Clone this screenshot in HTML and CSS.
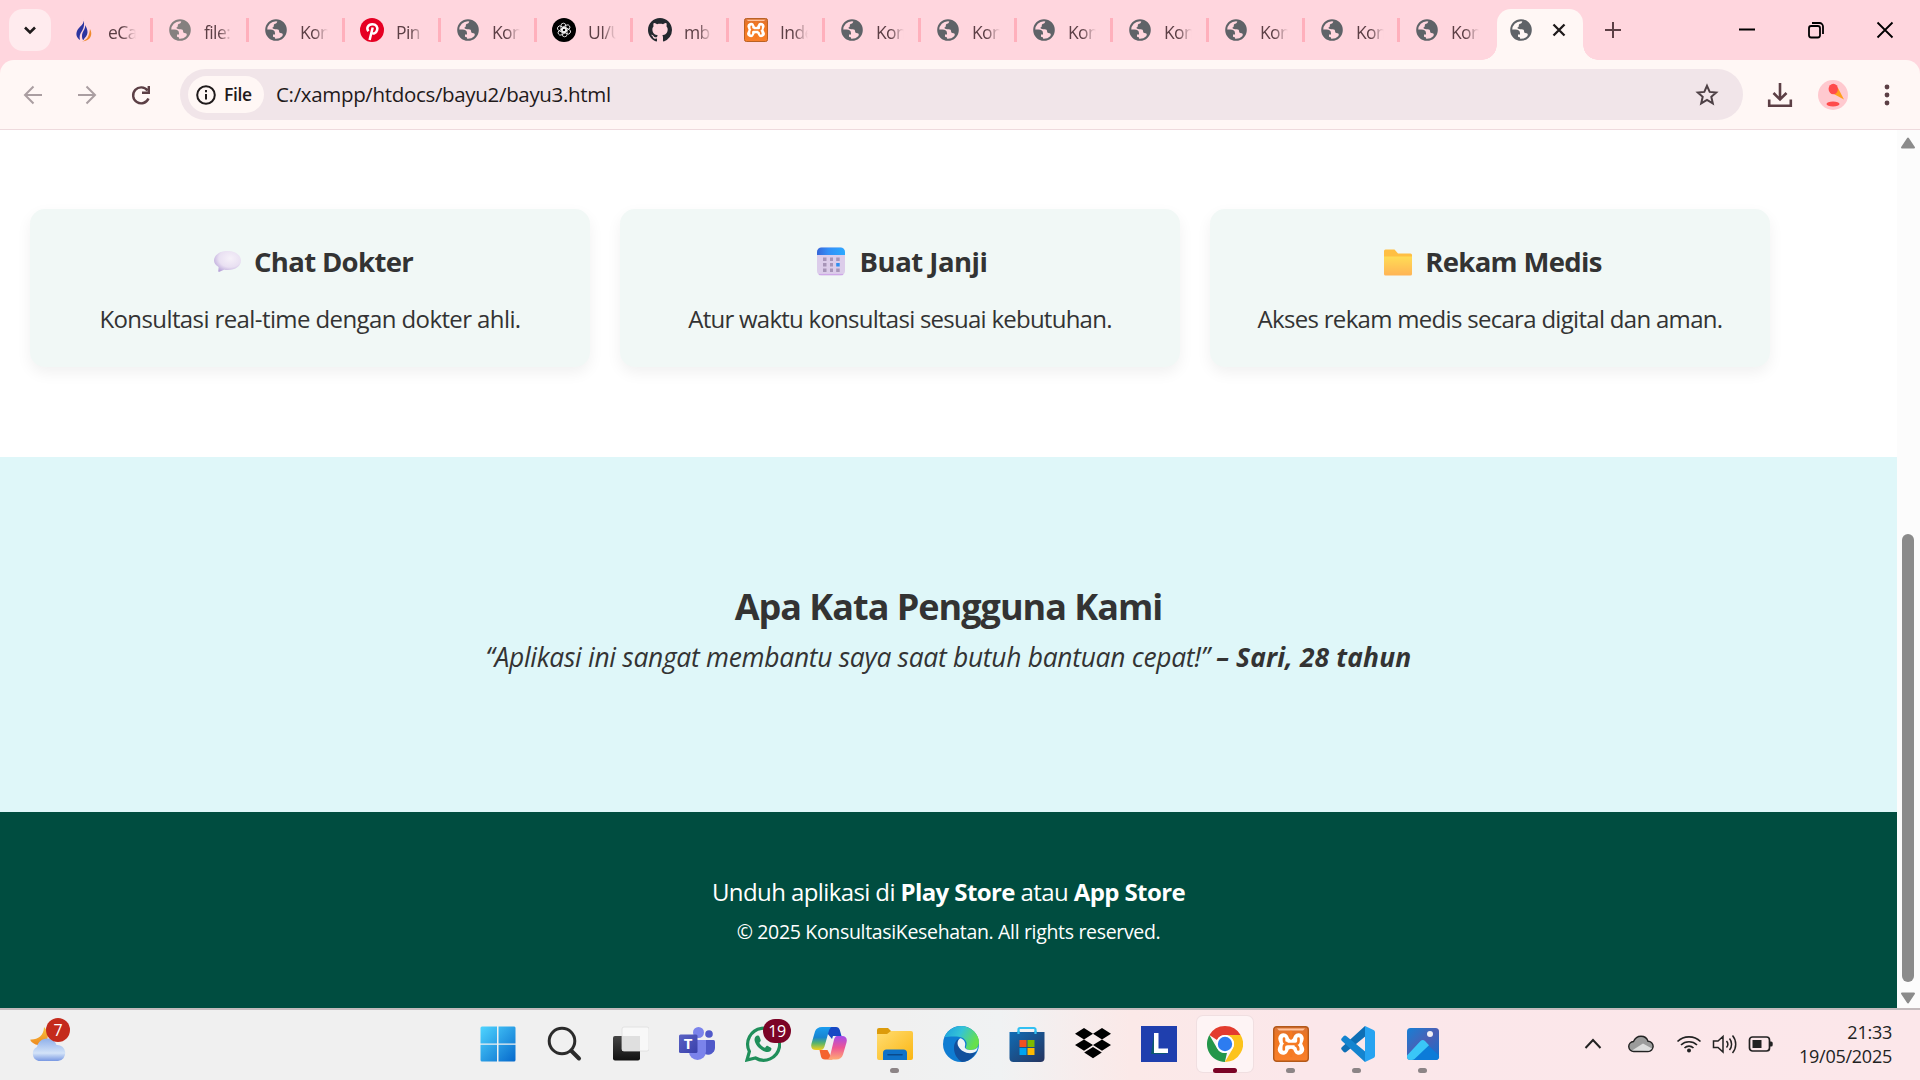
FILE: index.html
```html
<!DOCTYPE html>
<html lang="id">
<head>
<meta charset="utf-8">
<title>Konsultasi Kesehatan</title>
<link rel="stylesheet" href="styles.css">
</head>
<body>
<svg class="defs" width="0" height="0" aria-hidden="true">
  <defs>
    <linearGradient id="gWin" x1="0" y1="0" x2="1" y2="1"><stop offset="0" stop-color="#4fd5ff"/><stop offset="1" stop-color="#0669cc"/></linearGradient>
    <linearGradient id="gDark" x1="0" y1="0" x2="0" y2="1"><stop offset="0" stop-color="#454545"/><stop offset="1" stop-color="#111"/></linearGradient>
    <linearGradient id="gCloud" x1="0" y1="0" x2="0" y2="1"><stop offset="0" stop-color="#8fb0ea"/><stop offset=".65" stop-color="#d3e3f8"/><stop offset="1" stop-color="#7898e2"/></linearGradient>
    <linearGradient id="gFolder" x1="0" y1="0" x2="1" y2="1"><stop offset="0" stop-color="#ffdd72"/><stop offset="1" stop-color="#fbb613"/></linearGradient>
    <linearGradient id="gFolderE" x1="0" y1="0" x2="0" y2="1"><stop offset="0" stop-color="#ffdc55"/><stop offset="1" stop-color="#ffb455"/></linearGradient>
    <linearGradient id="gCal" x1="0" y1="0" x2="1" y2="0"><stop offset="0" stop-color="#3566d8"/><stop offset=".4" stop-color="#338ef7"/><stop offset="1" stop-color="#2caaff"/></linearGradient>
    <radialGradient id="gChat" cx=".6" cy=".35" r=".7"><stop offset="0" stop-color="#f6f1f9"/><stop offset=".6" stop-color="#e9e0f2"/><stop offset="1" stop-color="#b9a5d9"/></radialGradient>
    <linearGradient id="gCopA" x1="0" y1="0" x2="0" y2="1"><stop offset="0" stop-color="#1b9df0"/><stop offset=".45" stop-color="#1784d0"/><stop offset=".7" stop-color="#57b36c"/><stop offset="1" stop-color="#f4d01c"/></linearGradient>
    <linearGradient id="gCopB" x1="0" y1="0" x2="0" y2="1"><stop offset="0" stop-color="#a54bea"/><stop offset=".5" stop-color="#ee5694"/><stop offset="1" stop-color="#ffab75"/></linearGradient>
    <linearGradient id="gEdge" x1="0" y1="0" x2="1" y2=".4"><stop offset="0" stop-color="#1b9de0"/><stop offset=".5" stop-color="#34c3d6"/><stop offset="1" stop-color="#66e04c"/></linearGradient>
    <linearGradient id="gStore" x1="0" y1="0" x2="1" y2="1"><stop offset="0" stop-color="#0f6cb5"/><stop offset="1" stop-color="#26345f"/></linearGradient>
    <linearGradient id="gXampp" x1="0" y1="0" x2="0" y2="1"><stop offset="0" stop-color="#d9743a"/><stop offset=".3" stop-color="#f0741d"/><stop offset="1" stop-color="#f9802b"/></linearGradient>
    <linearGradient id="gPhoto" x1="0" y1="0" x2="1" y2="1"><stop offset="0" stop-color="#1580d6"/><stop offset=".5" stop-color="#4c5fb4"/><stop offset="1" stop-color="#0f6fd0"/></linearGradient>
    <linearGradient id="gTeams" x1="0" y1="0" x2="1" y2="1"><stop offset="0" stop-color="#5a62c3"/><stop offset="1" stop-color="#3940ab"/></linearGradient>
    <linearGradient id="gMoon" x1="0" y1="0" x2="0" y2="1"><stop offset="0" stop-color="#f7c440"/><stop offset="1" stop-color="#ee8a1d"/></linearGradient>
  </defs>
  <symbol id="globe" viewBox="0 0 24 24">
    <circle cx="12" cy="12" r="9.800" fill="none" stroke="currentColor" stroke-width="2"/>
    <path fill="currentColor" d="M13.500 2.200c-.2 2.300-1 3.200-2.400 3.600-1 .3-1.300.9-1.300 1.900 0 1.100-.6 1.600-1.500 1.900.3 1.300 1.200 1.700 3 1.700h1.500c1.600 0 2.300.9 2.300 2.200 0 1.200.9 1.700 2.200 1.700 1.100 0 1.500.700 1.500 1.700v2.200A10 10 0 0 0 13.500 2.200zM2.200 11.500h4.200c3 0 4.600 1.200 4.600 3.700v1.200h-2v1.700c0 .8.400 1.200 1.200 1.200h.8v2.500A10 10 0 0 1 2.200 11.500z"/>
  </symbol>
  <symbol id="xampp" viewBox="0 0 36 36">
    <rect x=".7" y=".7" width="34.600" height="34.600" rx="3" fill="url(#gXampp)" stroke="#b3591a" stroke-width="1.400"/>
    <path d="M4 2.500h28l-2 2H6z" fill="#ffc39b"/>
    <path d="M10.500 12.500 12.500 18l-2.500 5.500M25.500 12.500 23.500 18l2.500 5.500M13 18h10" fill="none" stroke="#fff" stroke-width="10.500" stroke-linecap="round" stroke-linejoin="round"/>
    <path d="M18 6v6.500M18 24v6" fill="none" stroke="#f57a22" stroke-width="2.500" stroke-linecap="round"/>
    <path d="M11 12.500v2c0 1.500 1 2.500 2.500 2.500M25.500 12.500v2.500c0 2-1.200 3-3 3h-8c-2.500 0-3.700 1.200-3.700 3v2.500M22.800 19.500c1.700.5 2.500 1.500 2.500 4" fill="none" stroke="#f57a22" stroke-width="2.600" stroke-linecap="round"/>
  </symbol>
</svg>

<header class="browser">
  <div class="tabstrip">
    <button class="tab-search"><svg width="16" height="16" viewBox="0 0 16 16"><path d="M3 5.500l5 5 5-5" fill="none" stroke="#1f1a1b" stroke-width="2.600"/></svg></button>
    <div class="tabs">
      <div class="tab"><svg viewBox="0 0 24 24"><path d="M11 0c3 6-4 8-6 13-1.500 4 0 7 3 9-1-4 0-6 2-9s3-8 1-13z" fill="#2c35a0"/><path d="M13 7c1 4-3 6-3 11 0 2 .5 4 1.500 4 1.500-3 4-4 4-8 0-2-1-5-2.500-7z" fill="#2c35a0"/><path d="M18 11c3 5 1 12-8 12.500 6-2 7-6 8-12.500z" fill="#ef8a2c"/></svg><span>eCa</span></div>
      <div class="tab dim"><svg><use href="#globe"/></svg><span>file:</span></div>
      <div class="tab"><svg><use href="#globe"/></svg><span>Kon</span></div>
      <div class="tab"><svg viewBox="0 0 24 24"><circle cx="12" cy="12" r="12" fill="#e60023"/><path d="M8.400 13.200C6 10.200 8 6.200 12.300 6.200c3.800 0 5.700 2.800 4.800 6-.9 3.300-4.300 4.400-5.800 2.200M12.700 9.500 9.600 22" fill="none" stroke="#fff" stroke-width="2.500"/></svg><span>Pin</span></div>
      <div class="tab"><svg><use href="#globe"/></svg><span>Kon</span></div>
      <div class="tab"><svg viewBox="0 0 24 24"><circle cx="12" cy="12" r="12" fill="#000"/><g fill="none" stroke="#fff" stroke-width=".8"><rect x="9" y="5.200" width="4.800" height="9" rx="2.400"/><rect x="9" y="5.200" width="4.800" height="9" rx="2.400" transform="rotate(60 12 12)"/><rect x="9" y="5.200" width="4.800" height="9" rx="2.400" transform="rotate(120 12 12)"/><rect x="9" y="5.200" width="4.800" height="9" rx="2.400" transform="rotate(180 12 12)"/><rect x="9" y="5.200" width="4.800" height="9" rx="2.400" transform="rotate(240 12 12)"/><rect x="9" y="5.200" width="4.800" height="9" rx="2.400" transform="rotate(300 12 12)"/></g></svg><span>UI/U</span></div>
      <div class="tab"><svg viewBox="0 0 16 16"><path fill="#24292f" d="M8 0C3.580 0 0 3.580 0 8c0 3.540 2.290 6.530 5.470 7.590.4.070.55-.17.55-.38 0-.19-.01-.82-.01-1.490-2.010.37-2.530-.49-2.690-.94-.09-.23-.48-.94-.82-1.130-.28-.15-.68-.52-.01-.53.63-.01 1.080.58 1.230.82.72 1.210 1.870.87 2.330.66.07-.52.28-.87.51-1.070-1.780-.2-3.640-.89-3.640-3.950 0-.87.31-1.590.82-2.150-.08-.2-.36-1.020.08-2.120 0 0 .67-.21 2.200.82.64-.18 1.320-.27 2-.27s1.360.09 2 .27c1.530-1.040 2.200-.82 2.200-.82.44 1.100.16 1.920.08 2.120.51.56.82 1.270.82 2.150 0 3.070-1.870 3.750-3.650 3.950.29.25.54.73.54 1.480 0 1.070-.01 1.930-.01 2.200 0 .21.15.46.55.38A8.010 8.010 0 0 0 16 8c0-4.420-3.580-8-8-8z"/></svg><span>mb</span></div>
      <div class="tab"><svg><use href="#xampp"/></svg><span>Inde</span></div>
      <div class="tab"><svg><use href="#globe"/></svg><span>Kon</span></div>
      <div class="tab"><svg><use href="#globe"/></svg><span>Kon</span></div>
      <div class="tab"><svg><use href="#globe"/></svg><span>Kon</span></div>
      <div class="tab"><svg><use href="#globe"/></svg><span>Kon</span></div>
      <div class="tab"><svg><use href="#globe"/></svg><span>Kon</span></div>
      <div class="tab short"><svg><use href="#globe"/></svg><span>Kon</span></div>
      <div class="tab last"><svg><use href="#globe"/></svg><span>Kon</span></div>
      <div class="tab-active">
        <svg class="ico" viewBox="0 0 24 24"><use href="#globe"/></svg>
        <svg width="14" height="14" viewBox="0 0 14 14"><path d="M1.500 1.500l11 11M12.500 1.500l-11 11" stroke="#1f1a1b" stroke-width="2.300"/></svg>
      </div>
      <svg class="plus" width="18" height="18" viewBox="0 0 18 18"><path d="M9 1v16M1 9h16" stroke="#5c3f45" stroke-width="2"/></svg>
    </div>
    <div class="window-buttons">
      <svg width="18" height="18" viewBox="0 0 18 18"><path d="M1 8.500h16" stroke="#000" stroke-width="2"/></svg>
      <svg width="18" height="18" viewBox="0 0 18 18"><g fill="none" stroke="#000" stroke-width="1.800"><rect x="2" y="5" width="11" height="11.500" rx="2.200"/><path d="M5 2h7.500a3.500 3.500 0 0 1 3.500 3.500V13"/></g></svg>
      <svg width="18" height="18" viewBox="0 0 18 18"><path d="M1.500 1.500l15 15M16.500 1.500l-15 15" stroke="#000" stroke-width="1.800"/></svg>
    </div>
  </div>
  <div class="toolbar">
    <div class="nav">
      <svg class="off" viewBox="0 0 24 24"><path d="M21 12H5M12.500 3.500 4 12l8.500 8.500" /></svg>
      <svg class="off" viewBox="0 0 24 24"><path d="M3 12h16M11.500 3.500 20 12l-8.500 8.500"/></svg>
      <svg viewBox="0 0 24 24"><path d="M19.500 15.500A8 8 0 1 1 18.500 7.500M19.800 3v6.800H13"/></svg>
    </div>
    <div class="omnibox">
      <div class="chip">
        <svg width="20" height="20" viewBox="0 0 20 20"><circle cx="10" cy="10" r="8.800" fill="none" stroke="#1f1a1b" stroke-width="2"/><path d="M10 9v5.500M10 5v2.200" stroke="#1f1a1b" stroke-width="2"/></svg>
        <span>File</span>
      </div>
      <span class="url">C:/xampp/htdocs/bayu2/bayu3.html</span>
      <svg class="star" width="24" height="24" viewBox="0 0 24 24"><path d="M12 2.800l2.700 6.100 6.500.6-4.900 4.300 1.500 6.600-5.800-3.500-5.800 3.500 1.500-6.600-4.900-4.300 6.500-.6z" fill="none" stroke="#4d4045" stroke-width="2"/></svg>
    </div>
    <div class="actions">
      <svg width="26" height="26" viewBox="0 0 26 26"><path d="M13 1v16M6.500 11l6.500 6.500 6.500-6.500M2.200 17.500v6.200h21.600v-6.200" fill="none" stroke="#5c3f45" stroke-width="2.600"/></svg>
      <svg width="30" height="30" viewBox="0 0 30 30"><circle cx="15" cy="15" r="15" fill="#ffc9cf"/><path d="M13 12.500 20 8l6 11.500z" fill="#ff9f1c"/><ellipse cx="15.300" cy="9" rx="4.700" ry="5.200" fill="#ff4b4b"/><ellipse cx="15" cy="24" rx="6.500" ry="2.400" fill="#ff4b4b"/></svg>
      <svg width="6" height="24" viewBox="0 0 6 24"><g fill="#5c3f45"><circle cx="3" cy="4" r="2.400"/><circle cx="3" cy="12" r="2.400"/><circle cx="3" cy="20" r="2.400"/></g></svg>
    </div>
  </div>
</header>

<div class="viewport">
  <main class="page">
    <section class="features">
      <article class="card">
        <h3><svg width="38" height="32" viewBox="0 0 38 32"><path d="M19.500 4C27 4 33 8 33 13.500S27.500 23 20 23c-1.800 0-3-.2-4-.3L11 25c-.6 0-1-.6-.6-2l.2-3C7.500 18 6 16 6 13.500 6 8 12 4 19.500 4z" transform="translate(1 1)" fill="url(#gChat)"/></svg><span class="t1">Chat Dokter</span></h3>
        <p class="p1">Konsultasi real-time dengan dokter ahli.</p>
      </article>
      <article class="card">
        <h3><svg width="38" height="32" viewBox="0 0 38 32"><rect x="4" y="1.500" width="28" height="28" rx="4.500" fill="#dccdea"/><path d="M4 9V6a4.500 4.500 0 0 1 4.500-4.500h19A4.500 4.500 0 0 1 32 6v3z" fill="url(#gCal)"/><path d="M6 28.500h24" stroke="#cfa8e8" stroke-width="1.200"/><path d="M10 11.500h3.500v3.500H10zm7 0h3v3.500h-3zm6.200 0h3.500v3.500h-3.500zM10 17h3.500v3.500H10zm7 0h3v3.500h-3zM10 22.500h3.500V26H10zm7 0h3V26h-3zm6.200 0h3.500V26h-3.500z" fill="#a795b8"/><path d="M23.200 17h3.500v3.500h-3.500z" fill="#2f8ff0"/></svg><span class="t2">Buat Janji</span></h3>
        <p class="p2">Atur waktu konsultasi sesuai kebutuhan.</p>
      </article>
      <article class="card">
        <h3><svg width="38" height="32" viewBox="0 0 38 32"><g transform="translate(1 0)"><path d="M5 5a1.500 1.500 0 0 1 1.500-1.500h9l3.500 4h12.500A1.500 1.500 0 0 1 33 9v5H5z" fill="#ffbf43"/><path d="M5 10.500h28V28a1.500 1.500 0 0 1-1.500 1.500h-25A1.500 1.500 0 0 1 5 28z" fill="url(#gFolderE)"/></g></svg><span class="t3">Rekam Medis</span></h3>
        <p class="p3">Akses rekam medis secara digital dan aman.</p>
      </article>
    </section>
    <section class="testimonial">
      <h2>Apa Kata Pengguna Kami</h2>
      <p><span>“Aplikasi ini sangat membantu saya saat butuh bantuan cepat!”</span> <strong>– Sari, 28 tahun</strong></p>
    </section>
    <footer class="site-footer">
      <p class="download">Unduh aplikasi di <strong>Play Store</strong> atau <strong>App Store</strong></p>
      <p class="copy">© 2025 KonsultasiKesehatan. All rights reserved.</p>
    </footer>
  </main>
  <div class="scrollbar">
    <svg width="16" height="12" viewBox="0 0 16 12"><path d="M8 1.500 14 10.500H2z" fill="#8b8b8b" stroke="#8b8b8b" stroke-width="2" stroke-linejoin="round"/></svg>
    <div class="track"><div class="thumb"></div></div>
    <svg width="16" height="12" viewBox="0 0 16 12"><path d="M8 10.500 14 1.500H2z" fill="#8b8b8b" stroke="#8b8b8b" stroke-width="2" stroke-linejoin="round"/></svg>
  </div>
</div>

<footer class="taskbar">
  <div class="weather">
    <svg width="38" height="38" viewBox="0 0 38 38"><path d="M15 2c3 3 5 8 3 13-2 4-9 7-14 3-2-1-3-3-2.500-3.500C8 15 15 11 15 2z" fill="url(#gMoon)"/><path d="M9.500 36a7.500 7.500 0 0 1-1.500-14c1-5 5-8.500 10-8.500 4.500 0 8 2.500 9.500 6.500A8 8 0 0 1 29 36z" fill="url(#gCloud)"/></svg>
    <span class="badge red">7</span>
  </div>
  <div class="apps">
    <div class="app start"><svg viewBox="0 0 36 36"><path d="M.5 2A1.500 1.500 0 0 1 2 .5h15v17H.5zM18.500.5h15A1.500 1.500 0 0 1 35.500 2v15.500h-17zM.5 18.800h16.500v16.700H2A1.500 1.500 0 0 1 .5 34zM18.500 18.800h17V34a1.500 1.500 0 0 1-1.500 1.500H18.500z" fill="url(#gWin)"/></svg></div>
    <div class="app"><svg viewBox="0 0 36 36"><circle cx="15" cy="15" r="12.800" fill="none" stroke="#2b2b2b" stroke-width="3"/><path d="M24.500 25 32 32.500" stroke="#2b2b2b" stroke-width="4" stroke-linecap="round"/></svg></div>
    <div class="app"><svg viewBox="0 0 36 36"><rect y="10" width="27" height="24.500" rx="2" fill="url(#gDark)"/><path d="M9 10h18v15H9z" fill="#b9b9b9"/><rect x="9" y="1" width="27" height="24" rx="2" fill="#fff" fill-opacity=".55" stroke="#ddd" stroke-width=".8"/></svg></div>
    <div class="app"><svg viewBox="0 0 36 36"><circle cx="19.500" cy="6.500" r="5.500" fill="#7b83eb"/><circle cx="30" cy="8" r="3.800" fill="#5059c9"/><path d="M25 14h9.500a1.500 1.500 0 0 1 1.500 1.500V22a7 7 0 0 1-10 6z" fill="#5059c9"/><path d="M10 14h17v11.500a8.500 8.500 0 0 1-17 0z" fill="#7b83eb"/><rect y="8.500" width="18.500" height="18.500" rx="1.500" fill="url(#gTeams)"/><text x="9.200" y="22.500" text-anchor="middle" class="teams-t">T</text></svg></div>
    <div class="app"><svg viewBox="0 0 36 36"><path d="M2 34l2.400-8.500A16 16 0 1 1 10.500 32z" fill="none" stroke="#1f8f5a" stroke-width="3.200"/><path d="M12.500 9.500c-1 0-3 1.300-3 4 0 5 7 12.500 13 12.500 2.500 0 4-1.700 4-3.500 0-.6-3.800-2.700-4.500-2.700-.8 0-1.500 2-2.200 2-1 0-5.300-3.500-5.300-5 0-.7 1.300-1.500 1.300-2.300 0-.7-1.300-4-1.800-4.600-.3-.3-1-.4-1.500-.4z" fill="#1f8f5a"/></svg><span class="badge wine">19</span></div>
    <div class="app"><svg viewBox="0 0 36 36"><path d="M11 1h14c2 0 3.200 1 3.800 3l1.700 6H22l-1 3z" fill="#1648c4"/><path d="M8.500 24h8l5 9.500H14c-2.300 0-3.500-1-4-3z" fill="#f4632f"/><path d="M11 1h9.500c-1.500 1-2.200 2.500-2.800 4.500l-4.200 15c-.8 2.500-2 3.500-4 3.500H5c-4 0-5.500-2.500-4.500-6.500l3.500-12C5 2.500 7.500 1 11 1z" fill="url(#gCopA)"/><path d="M26 10h5c4 0 5.500 2.500 4.500 6.500l-3.500 12c-1 3.500-3.500 5-7 5h-8.500c1.500-1 2.200-2.500 2.800-4.500l3.500-14.500C23.500 11.500 24.500 10 26 10z" fill="url(#gCopB)"/></svg></div>
    <div class="app run"><svg viewBox="0 0 36 36"><path d="M0 4a2 2 0 0 1 2-2h9l3.500 3.500v4H0z" fill="#dc9b0b"/><path d="M0 8h10l4-3h20a2 2 0 0 1 2 2v25a2 2 0 0 1-2 2H2a2 2 0 0 1-2-2z" fill="url(#gFolder)"/><path d="M6 34V27a3.500 3.500 0 0 1 3.500-3.500h17A3.500 3.500 0 0 1 30 27v7z" fill="#0f72c8"/><path d="M11 28.800h14" stroke="#0a4a8c" stroke-width="1.600" stroke-linecap="round"/></svg></div>
    <div class="app"><svg viewBox="0 0 36 36"><circle cx="18" cy="18" r="18" fill="#0f7cd2"/><path d="M1.500 11C4.500 4 11 0 18 0c10 0 18 8 18 16 0 5-3.500 8-8 8-3.500 0-6-1-5-3.500 2-4-1-8.500-6-9.500C11 10 4 11 1.500 11z" fill="url(#gEdge)"/><path d="M11 22c0-4.500 2-8 5-9.500-1 2-1.500 5 0 8 3 6 12 8 17.500 5C30 32 24.500 36 19 36 14 33 11 28 11 22z" fill="#124f9c"/><path d="M15.500 20.500C13.500 17 15 13.500 17.500 12.300c3.500 1.200 5.500 4.500 4.500 7.700-1 2.500 2 4 6 4 3 0 5.500-1 7-3-1 3-1.500 4.300-3.500 5.200-6 2.500-13-.2-16-5.700z" fill="#f0f3f6"/></svg></div>
    <div class="app"><svg viewBox="0 0 36 36"><path d="M9.500 8V3.500a1.500 1.500 0 0 1 1.500-1.500h14a1.500 1.500 0 0 1 1.500 1.500V8" fill="none" stroke="#32c0f2" stroke-width="2.200"/><path d="M.5 6h35v26a4 4 0 0 1-4 4h-27a4 4 0 0 1-4-4z" fill="url(#gStore)"/><path d="M9.500 5v3M26.500 5v3" stroke="#32c0f2" stroke-width="2.200"/><path d="M10.500 14h7v7h-7z" fill="#f25022"/><path d="M18.500 14h7v7h-7z" fill="#7fba00"/><path d="M10.500 22h7v7h-7z" fill="#00a4ef"/><path d="M18.500 22h7v7h-7z" fill="#ffb900"/></svg></div>
    <div class="app"><svg viewBox="0 0 36 36"><path d="M9 2l9 5.700-9 5.700-9-5.700zM27 2l9 5.700-9 5.700-9-5.700zM9 13.400l9 5.700-9 5.700-9-5.700zM27 13.400l9 5.700-9 5.700-9-5.700zM18 21l8.800 5.600L18 32.300l-8.800-5.700z" fill="#000"/></svg></div>
    <div class="app"><svg viewBox="0 0 36 36"><path d="M0 0h36v36H0z" fill="#1f3fae"/><path d="M13 8 10 28h17l-10-3z" fill="#0d5a6e"/><path d="M13 7h4.500v15.500H27V27H13z" fill="#fff"/></svg></div>
    <div class="app current"><svg viewBox="0 0 36 36"><path d="M18 0a18 18 0 0 1 15.600 9H18a9 9 0 0 0-8 5L2.400 9A18 18 0 0 1 18 0z" fill="#e33b2e"/><path d="M2.400 9l7.800 13.500A9 9 0 0 0 20 26.800L17.900 36A18 18 0 0 1 2.400 9z" fill="#24964a"/><path d="M33.600 9A18 18 0 0 1 17.900 36l7.900-13.500A9 9 0 0 0 18 9z" fill="#fcc31c"/><circle cx="18" cy="18" r="9" fill="#fff"/><circle cx="18" cy="18" r="7.200" fill="#2d7cf0"/></svg></div>
    <div class="app run"><svg><use href="#xampp"/></svg></div>
    <div class="app run"><svg viewBox="0 0 36 36"><path d="M26 0 3 21c-1 1-1.200 2 0 3l1.500 1.800c1 .8 2 .8 3 0L28 9z" fill="#0e6fb5"/><path d="M26 36 3 15c-1-1-1.200-2 0-3l1.500-1.800c1-.8 2-.8 3 0L28 27z" fill="#1484cf"/><path d="M26 0l8.500 4A2.500 2.500 0 0 1 36 6v24a2.500 2.500 0 0 1-1.500 2L26 36z" fill="#27a3f1"/></svg></div>
    <div class="app run"><svg viewBox="0 0 36 36"><rect x="2" y="2" width="32" height="32" rx="3.500" fill="url(#gPhoto)"/><path d="M14 25l5-4.500c2-1.700 3.500-1.700 5.500 0l9.500 9a3.500 3.500 0 0 1-3.500 4.500H8z" fill="#0c7bd8"/><path d="M2 29.500 15.500 15c1.500-1.500 3-1.500 4.500 0l4 4.200L9.500 33a5 5 0 0 1-3.500 1h-.5A3.500 3.500 0 0 1 2 30.500z" fill="#3ac6f7"/><circle cx="25" cy="8" r="3" fill="#f2eef4"/></svg></div>
  </div>
  <div class="tray">
    <svg width="18" height="12" viewBox="0 0 18 12"><path d="M1.500 10 9 2l7.500 8" fill="none" stroke="#222" stroke-width="2"/></svg>
    <svg width="26" height="18" viewBox="0 0 26 18"><path d="M6 16.500a5 5 0 0 1-.5-10C7 3 10 1.200 13 1.200c3.500 0 6 2 7 5a5 5 0 0 1 0 10.300z" fill="#9b9b9b" stroke="#222" stroke-width="1.400"/><path d="M4 15.500 15 8.500l9 5-3 2.300z" fill="#dcdcdc"/></svg>
    <svg width="26" height="20" viewBox="0 0 26 20"><g fill="none" stroke="#222" stroke-width="1.700"><path d="M1.500 7.500a16.500 16.500 0 0 1 23 0M5 11a11.500 11.500 0 0 1 16 0M8.500 14a6.500 6.500 0 0 1 9 0"/></g><circle cx="13" cy="16.500" r="2" fill="#222"/></svg>
    <svg width="26" height="20" viewBox="0 0 26 20"><path d="M1.500 7v6.500H6l5 4.500V2.500L6 7zM14.500 7a5 5 0 0 1 0 6.500M17.500 4.500a9 9 0 0 1 0 11.500M20.500 1.500a13.500 13.500 0 0 1 0 17.500" fill="none" stroke="#222" stroke-width="1.500"/></svg>
    <svg width="26" height="18" viewBox="0 0 26 18"><rect x="1.500" y="2" width="20" height="14" rx="3" fill="none" stroke="#222" stroke-width="1.700"/><path d="M4.500 5h9v8h-9zM22 6.500h1.200a1.500 1.500 0 0 1 1.500 1.500v2a1.500 1.500 0 0 1-1.500 1.500H22z" fill="#222"/></svg>
    <div class="clock"><span>21:33</span><span>19/05/2025</span></div>
  </div>
</footer>
</body>
</html>
```
FILE: styles.css
```css
* { box-sizing: border-box; margin: 0; padding: 0; }
body {
  width: 1920px; height: 1080px; overflow: hidden;
  display: flex; flex-direction: column;
  font-family: "Open Sans", "Noto Sans", sans-serif;
  color: #333; background: #fff;
}
svg { display: block; flex: none; }
.defs { position: absolute; }

/* browser chrome */
.browser { height: 130px; background: #ffd6de; }
.tabstrip { height: 60px; display: flex; align-items: center; padding-left: 9px; }
.tab-search {
  width: 42px; height: 42px; border: 0; border-radius: 14px; background: #ffebee;
  display: flex; align-items: center; justify-content: center;
}
.tabs { display: flex; align-items: center; margin-left: 6px; height: 60px; flex: 1; }
.tab {
  width: 96px; height: 24px; padding-left: 15px; color: #5f6368;
  display: flex; align-items: center; border-right: 3px solid #ffb0bc;
}
.tab svg { width: 24px; height: 24px; }
.tab.dim { color: #85807f; }
.tab span {
  margin-left: 12px; width: 28px; overflow: hidden; white-space: nowrap;
  font-size: 17.500px; line-height: 26px; letter-spacing: -.6px; color: #5c3f45; padding-top: 3px;
  -webkit-mask-image: linear-gradient(90deg, #000 50%, transparent);
  mask-image: linear-gradient(90deg, #000 50%, transparent);
}
.tab.short { width: 95px; }
.tab.last { width: 97px; border: 0; }
.tab-active {
  width: 86px; height: 51px; align-self: flex-end; background: #fff7f5;
  border-radius: 14px 14px 0 0; position: relative;
  display: flex; align-items: center; padding: 0 17px 9px 12px; justify-content: space-between;
}
.tab-active::before, .tab-active::after {
  content: ""; position: absolute; bottom: 0; width: 15px; height: 15px;
}
.tab-active::before { left: -15px; background: radial-gradient(circle at 0 0, transparent 14.500px, #fff7f5 15px); }
.tab-active::after { right: -15px; background: radial-gradient(circle at 100% 0, transparent 14.500px, #fff7f5 15px); }
.tab-active .ico { width: 24px; height: 24px; color: #5f6368; }
.plus { margin-left: 21px; }
.window-buttons { display: flex; gap: 51px; padding-right: 26px; }

.toolbar {
  height: 70px; background: #fff7f5; border-bottom: 1px solid #eedadd;
  border-radius: 14px 14px 0 0; display: flex; align-items: center; padding-left: 21px;
}
.nav { display: flex; gap: 30px; }
.nav svg { width: 24px; height: 24px; fill: none; stroke: #5c3f45; stroke-width: 2.400px; }
.nav .off { stroke: #aa9ea1; stroke-width: 2px; }
.omnibox {
  margin-left: 27px; width: 1563px; height: 51px; border-radius: 26px; background: #f1e5e9;
  display: flex; align-items: center; padding: 0 24px 0 8px; color: #1f1a1b;
}
.chip {
  width: 76px; height: 37px; border-radius: 19px; background: #fff7f5;
  display: flex; align-items: center; padding-left: 8px; gap: 8px;
}
.chip span { font-size: 17.500px; font-weight: 600; letter-spacing: -.4px; padding-bottom: 1px; }
.url { margin-left: 12px; font-size: 20.500px; letter-spacing: -.33px; white-space: nowrap; padding-bottom: 2px; }
.star { margin-left: auto; }
.actions { display: flex; align-items: center; margin-left: 24px; }
.actions svg + svg { margin-left: 25px; }
.actions svg:last-child { margin-left: 36px; }

/* page */
.viewport { height: 878px; display: flex; }
.page { width: 1897px; display: flex; flex-direction: column; }
.features {
  height: 327px; padding: 79px 30px 0; display: grid;
  grid-template-columns: repeat(3, 560px); gap: 30px; align-items: start;
}
.card {
  height: 158px; border-radius: 15px; background: #f1f8f6; text-align: center;
  box-shadow: 0 6px 15px rgba(0, 0, 0, .06); padding-top: 30px;
}
.card h3 {
  display: flex; justify-content: center; align-items: center; gap: 9px;
  height: 46px; font-size: 27.500px; line-height: 46px; white-space: nowrap;
}
.card p { margin-top: 15px; font-size: 24px; line-height: 38px; white-space: nowrap; }
.t1, .t3 { letter-spacing: -.65px; }
.t2 { letter-spacing: -.5px; }
.p1 { letter-spacing: -.6px; }
.p2 { letter-spacing: -.75px; }
.p3 { letter-spacing: -.7px; }
.testimonial { height: 355px; background: #dff7f9; text-align: center; padding-top: 120px; }
.testimonial h2 { font-size: 36px; line-height: 60px; letter-spacing: -1px; }
.testimonial p { font-size: 26.400px; line-height: 40px; font-style: italic; white-space: nowrap; letter-spacing: -.28px; }
.testimonial strong { letter-spacing: .15px; }
.site-footer { flex: 1; background: #004d40; color: #fff; text-align: center; padding-top: 60px; }
.download { font-size: 24px; line-height: 40px; letter-spacing: -.6px; }
.copy { font-size: 19.500px; line-height: 40px; letter-spacing: -.33px; }

.scrollbar { width: 23px; background: #fcfcfc; display: flex; flex-direction: column; align-items: center; padding: 7px 1px 4px 0; }
.track { flex: 1; width: 12px; padding: 385px 0 10px; display: flex; }
.thumb { width: 12px; border-radius: 6px; background: #8b8b8b; }

/* taskbar */
.taskbar {
  height: 72px; border-top: 2px solid #c3babc; display: flex; align-items: center; padding-bottom: 2px;
  background: linear-gradient(90deg, #f0f0f0 0, #f0f0f0 900px, #f0f2f3 1000px, #fbe9e8 1130px, #fbe7ea 1300px, #fce7ea 100%);
}
.weather { position: relative; width: 38px; margin: 0 0 0 29px; }
.badge {
  position: absolute; display: flex; align-items: center; justify-content: center;
  color: #fff; font-size: 16px; letter-spacing: -.3px; border-radius: 12px; height: 24px;
}
.red { width: 24px; background: #c42b1c; left: 17px; top: -7px; }
.wine { width: 28px; background: #7b0326; left: 33px; top: 3px; }
.apps { display: flex; margin-left: 399px; }
.app {
  width: 66px; height: 56px; padding: 10px 15px; position: relative;
}
.app svg { width: 36px; height: 36px; }
.start { padding-left: 14px; }
.teams-t { font: bold 15px "Open Sans", sans-serif; fill: #fff; }
.run::after, .current::after {
  content: ""; position: absolute; bottom: -1px; left: 28px; width: 9px; height: 5px;
  border-radius: 3px; background: #8c8486;
}
.current::after { left: 21px; width: 24px; background: #7b0326; }
.current::before {
  content: ""; position: absolute; inset: 0 5px; border-radius: 6px;
  background: #fef4f5; box-shadow: 0 0 0 1px #f0dfe1;
}
.current svg { position: relative; }
.tray { display: flex; align-items: center; margin-left: auto; padding-right: 28px; }
.tray svg:nth-child(2) { margin-left: 26px; }
.tray svg:nth-child(3) { margin-left: 22px; }
.tray svg:nth-child(4), .tray svg:nth-child(5) { margin-left: 10px; }
.clock {
  width: 94px; margin-left: 24px; display: flex; flex-direction: column; align-items: flex-end;
  font-size: 18px; line-height: 24px; color: #222; white-space: nowrap; letter-spacing: -.25px;
}
```
